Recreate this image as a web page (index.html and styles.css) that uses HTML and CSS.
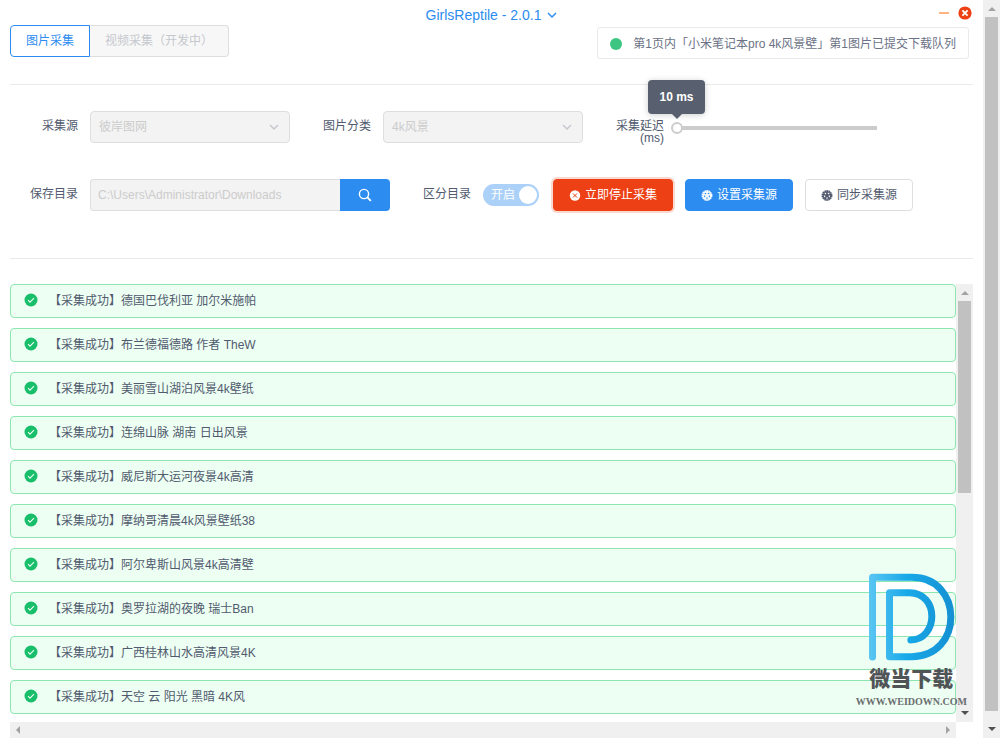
FILE: index.html
```html
<!DOCTYPE html>
<html lang="zh-CN">
<head>
<meta charset="utf-8">
<meta name="viewport" content="width=device-width, initial-scale=1">
<title>GirlsReptile - 2.0.1</title>
<link rel="stylesheet" href="styles.css">
</head>
<body>
<svg class="sprite" aria-hidden="true">
  <symbol id="chevron" viewBox="0 0 10 10"><path d="M1 3l4 4 4-4" fill="none" stroke="currentColor" stroke-width="1.5"/></symbol>
  <symbol id="close" viewBox="0 0 14 14"><circle cx="7" cy="7" r="6.6" fill="currentColor"/><path d="M4.4 4.4l5.2 5.2M9.6 4.4l-5.2 5.2" stroke="#fff" stroke-width="1.9"/></symbol>
  <symbol id="stop" viewBox="0 0 12 12"><circle cx="6" cy="6.5" r="5.2" fill="currentColor"/><path d="M4 4.5l4 4M8 4.5l-4 4" stroke="#ed4014" stroke-width="1"/></symbol>
  <symbol id="check" viewBox="0 0 14 14"><circle cx="7" cy="7" r="6.5" fill="currentColor"/><path d="M4 7.2l2 2 4-4" fill="none" stroke="#edfff3" stroke-width="1.1"/></symbol>
  <symbol id="search" viewBox="0 0 14 14"><circle cx="6" cy="6" r="4.6" fill="none" stroke="currentColor" stroke-width="1.4"/><path d="M9.2 9.2l3.6 3.6" stroke="currentColor" stroke-width="1.9"/></symbol>
  <symbol id="gear" viewBox="0 0 12 12"><circle cx="6" cy="6.5" r="4.7" fill="none" stroke="currentColor" stroke-width="1.5" stroke-dasharray="1.6 .5"/><circle cx="6" cy="6.5" r="3.7" fill="none" stroke="currentColor" stroke-width="1.2"/><path d="M6 6.5v-4M6 6.5l3.8-1.2M6 6.5l2.4 3.3M6 6.5l-2.4 3.3M6 6.5l-3.8-1.2" stroke="currentColor" stroke-width="1.7"/></symbol>
  <symbol id="arrow-up" viewBox="0 0 8 8"><path d="M0 6l4-4 4 4z" fill="currentColor"/></symbol>
  <symbol id="arrow-down" viewBox="0 0 8 8"><path d="M0 2l4 4 4-4z" fill="currentColor"/></symbol>
  <symbol id="arrow-left" viewBox="0 0 8 8"><path d="M6 0L2 4l4 4z" fill="currentColor"/></symbol>
  <symbol id="arrow-right" viewBox="0 0 8 8"><path d="M2 0l4 4-4 4z" fill="currentColor"/></symbol>
</svg>
<div class="app">
  <main class="content">
    <header class="top">
      <div class="tabs">
        <button class="tab tab-active" type="button">图片采集</button>
        <button class="tab" type="button" disabled>视频采集<span lang="zh-TW">（</span>开发中<span lang="zh-TW">）</span></button>
      </div>
      <a class="title" href="#">GirlsReptile - 2.0.1<svg class="icon-10"><use href="#chevron"/></svg></a>
      <div class="top-right">
        <div class="window-controls">
          <button class="minimize" type="button" aria-label="最小化"></button>
          <button class="close" type="button" aria-label="关闭"><svg class="icon-14"><use href="#close"/></svg></button>
        </div>
        <div class="status"><span class="dot"></span>第1页内「小米笔记本pro 4k风景壁」第1图片已提交下载队列</div>
      </div>
    </header>

    <form class="settings">
      <div class="row">
        <label class="label label-first" for="source">采集源</label>
        <div class="select">
          <select id="source" disabled><option>彼岸图网</option></select>
          <svg class="select-arrow icon-10"><use href="#chevron"/></svg>
        </div>
        <label class="label" for="category">图片分类</label>
        <div class="select">
          <select id="category" disabled><option>4k风景</option></select>
          <svg class="select-arrow icon-10"><use href="#chevron"/></svg>
        </div>
        <label class="label" for="delay">采集延迟<br>(ms)</label>
        <div class="slider">
          <output class="tooltip" for="delay">10 ms</output>
          <input id="delay" type="range" min="10" max="1000" value="10" disabled>
        </div>
      </div>
      <div class="row">
        <label class="label label-first" for="folder">保存目录</label>
        <div class="path">
          <input id="folder" type="text" value="C:\Users\Administrator\Downloads" disabled>
          <button type="button" aria-label="选择目录"><svg class="icon-14"><use href="#search"/></svg></button>
        </div>
        <label class="label" for="split">区分目录</label>
        <div class="switch">
          <input id="split" type="checkbox" checked disabled>
          <span class="switch-text">开启</span>
        </div>
        <div class="actions">
          <button class="btn btn-stop" type="button"><svg class="icon-12"><use href="#stop"/></svg>立即停止采集</button>
          <button class="btn btn-primary" type="button"><svg class="icon-12"><use href="#gear"/></svg>设置采集源</button>
          <button class="btn" type="button"><svg class="icon-12"><use href="#gear"/></svg>同步采集源</button>
        </div>
      </div>
    </form>

    <section class="log">
      <ul class="log-list">
        <li><svg class="icon-14"><use href="#check"/></svg>【采集成功】德国巴伐利亚 加尔米施帕</li>
        <li><svg class="icon-14"><use href="#check"/></svg>【采集成功】布兰德福德路 作者 TheW</li>
        <li><svg class="icon-14"><use href="#check"/></svg>【采集成功】美丽雪山湖泊风景4k壁纸</li>
        <li><svg class="icon-14"><use href="#check"/></svg>【采集成功】连绵山脉 湖南 日出风景</li>
        <li><svg class="icon-14"><use href="#check"/></svg>【采集成功】威尼斯大运河夜景4k高清</li>
        <li><svg class="icon-14"><use href="#check"/></svg>【采集成功】摩纳哥清晨4k风景壁纸38</li>
        <li><svg class="icon-14"><use href="#check"/></svg>【采集成功】阿尔卑斯山风景4k高清壁</li>
        <li><svg class="icon-14"><use href="#check"/></svg>【采集成功】奥罗拉湖的夜晚 瑞士Ban</li>
        <li><svg class="icon-14"><use href="#check"/></svg>【采集成功】广西桂林山水高清风景4K</li>
        <li><svg class="icon-14"><use href="#check"/></svg>【采集成功】天空 云 阳光 黑暗 4K风</li>
      </ul>
      <div class="scroll-y">
        <svg class="arrow"><use href="#arrow-up"/></svg>
        <div class="track"><div class="thumb thumb-log"></div></div>
        <svg class="arrow arrow-on"><use href="#arrow-down"/></svg>
      </div>
      <div class="scroll-x">
        <svg class="arrow"><use href="#arrow-left"/></svg>
        <svg class="arrow"><use href="#arrow-right"/></svg>
      </div>
    </section>
  </main>
  <div class="scroll-y">
    <svg class="arrow"><use href="#arrow-up"/></svg>
    <div class="track"><div class="thumb thumb-page"></div></div>
    <svg class="arrow arrow-on"><use href="#arrow-down"/></svg>
  </div>
  <div class="watermark">
    <svg class="logo" viewBox="84 38 260 264">
      <defs><linearGradient id="blue" gradientUnits="userSpaceOnUse" x1="86" y1="170" x2="342" y2="170"><stop offset="0" stop-color="#5bc6f2"/><stop offset=".45" stop-color="#18a8e8"/><stop offset="1" stop-color="#1590d2"/></linearGradient></defs>
      <path d="M97 290V51H215C290 51 332 107 332 170S290 289 215 289H148V97H208C252 97 275 132 275 168S252 239 212 239" fill="none" stroke="url(#blue)" stroke-width="21" stroke-linecap="round" stroke-linejoin="round"/>
    </svg>
    <strong class="brand">微当下载</strong>
    <span class="site">WWW.WEIDOWN.COM</span>
  </div>
</div>
</body>
</html>
```
FILE: styles.css
```css
* { box-sizing: border-box; }

body {
  margin: 0;
  background: #fff;
  color: #515a6e;
  font: 12px/18px "Liberation Sans", "Noto Sans CJK SC", sans-serif;
}

button, input, select { font: inherit; }
button { padding: 0; cursor: pointer; }

.sprite { position: absolute; width: 0; height: 0; }
.icon-10 { width: 10px; height: 10px; }
.icon-12 { width: 12px; height: 12px; }
.icon-14 { width: 14px; height: 14px; }

.app { position: relative; display: flex; min-height: 100vh; }
.content { flex: 1; min-width: 0; padding: 0 10px; }

/* Header */
.top {
  display: grid;
  grid-template-columns: 1fr auto 1fr;
  align-items: start;
  height: 85px;
  border-bottom: 1px solid #e8eaec;
}
.tabs { display: flex; padding-top: 25px; }
.tab {
  height: 32px;
  padding: 0 15px;
  border: 1px solid #dcdee2;
  border-left: 0;
  border-radius: 0 4px 4px 0;
  background: #f7f7f7;
  color: #c5c8ce;
  white-space: nowrap;
}
.tab span { font-family: "Noto Sans CJK TC", sans-serif; line-height: 12px; }
.tab-active {
  border: 1px solid #2d8cf0;
  border-radius: 4px 0 0 4px;
  background: #fff;
  color: #2d8cf0;
}
.title {
  display: flex;
  align-items: center;
  gap: 6px;
  padding-top: 6px;
  color: #2d8cf0;
  font-size: 14px;
  text-decoration: none;
}
.top-right {
  display: flex;
  flex-direction: column;
  align-items: flex-end;
  gap: 7px;
  padding-top: 6px;
}
.window-controls { display: flex; align-items: center; gap: 9px; padding-right: 1px; }
.minimize { width: 10px; height: 2px; border: 0; background: #ffb583; }
.close { display: flex; border: 0; background: none; color: #ed4014; }
.status {
  display: flex;
  align-items: center;
  height: 32px;
  margin-right: 4px;
  padding: 1px 12px 0;
  border: 1px solid #e8eaec;
  border-radius: 3px;
  color: #6b7286;
  white-space: nowrap;
}
.dot { width: 12px; height: 12px; margin-right: 11px; border-radius: 50%; background: #3cc681; }

/* Settings */
.settings {
  display: grid;
  gap: 36px;
  padding: 26px 0 47px;
  border-bottom: 1px solid #e8eaec;
}
.row { display: flex; height: 32px; }
.label {
  width: 93px;
  padding: 9px 12px 0 0;
  line-height: 12px;
  text-align: right;
  white-space: nowrap;
}
.label-first { width: 80px; }
.select { position: relative; width: 200px; }
.select select {
  width: 100%;
  height: 32px;
  padding: 0 8px;
  border: 1px solid #dcdee2;
  border-radius: 4px;
  background: #f3f3f3;
  color: #ccc;
  opacity: 1;
  appearance: none;
}
.select-arrow { position: absolute; top: 11px; right: 11px; color: #c5c8ce; pointer-events: none; }

.slider { position: relative; display: flex; align-items: center; }
.slider input {
  width: 212px;
  height: 12px;
  margin: 2px 0 0 -5px;
  background: linear-gradient(#ccc, #ccc) center / 200px 4px no-repeat;
  appearance: none;
}
.slider input::-webkit-slider-thumb {
  width: 12px;
  height: 12px;
  border: 2px solid #ccc;
  border-radius: 50%;
  background: #fff;
  appearance: none;
}
.tooltip {
  position: absolute;
  bottom: 29px;
  left: -28px;
  width: 57px;
  border-radius: 4px;
  background: #585f6e;
  box-shadow: 0 1px 6px rgba(0, 0, 0, .2);
  color: #fff;
  font-weight: bold;
  line-height: 34px;
  text-align: center;
}
.tooltip::after {
  content: "";
  position: absolute;
  top: 100%;
  left: 50%;
  margin-left: -5px;
  border: 5px solid transparent;
  border-top-color: #585f6e;
  border-bottom: 0;
}

.path { display: flex; width: 300px; }
.path input {
  flex: 1;
  min-width: 0;
  padding: 0 7px;
  border: 1px solid #dcdee2;
  border-right: 0;
  border-radius: 4px 0 0 4px;
  background: #f3f3f3;
  color: #ccc;
}
.path button {
  display: flex;
  align-items: center;
  justify-content: center;
  width: 50px;
  border: 0;
  border-radius: 0 4px 4px 0;
  background: #2d8cf0;
  color: #fff;
}

.switch { position: relative; width: 56px; padding-top: 5px; }
.switch input {
  display: flex;
  justify-content: flex-end;
  align-items: center;
  width: 56px;
  height: 22px;
  margin: 0;
  padding: 1px;
  border-radius: 11px;
  background: #abd1f9;
  appearance: none;
}
.switch input::after { content: ""; width: 18px; height: 18px; margin-right: 1px; border-radius: 50%; background: #fff; }
.switch-text { position: absolute; top: 7px; left: 8px; color: #fff; pointer-events: none; }

.actions { display: flex; gap: 12px; margin-left: 14px; }
.btn {
  display: flex;
  align-items: center;
  gap: 4px;
  padding: 0 15px;
  border: 1px solid #dcdee2;
  border-radius: 4px;
  background: #fff;
  color: #515a6e;
  white-space: nowrap;
}
.btn-stop { border-color: #ed4014; background: #ed4014; box-shadow: 0 0 0 2px rgba(237, 64, 20, .2); color: #fff; }
.btn-primary { border-color: #2d8cf0; background: #2d8cf0; color: #fff; }

/* Log */
.log { display: grid; grid-template-columns: 1fr 17px; padding-top: 25px; }
.log-list {
  display: grid;
  gap: 10px;
  margin: 0;
  padding: 0 0 8px;
  list-style: none;
}
.log-list li {
  display: flex;
  align-items: center;
  height: 34px;
  padding: 0 13px;
  border: 1px solid #8ce6b0;
  border-radius: 4px;
  background: #edfff3;
}
.log-list svg { margin: 0 11px 2px 0; color: #19be6b; }

/* Scrollbars */
.scroll-y {
  display: flex;
  flex-direction: column;
  align-items: center;
  width: 17px;
  padding: 5px 2px;
  background: #f0f0f0;
}
.scroll-x {
  display: flex;
  align-items: center;
  justify-content: space-between;
  height: 16px;
  padding: 0 4px;
  background: #f0f0f0;
}
.arrow { width: 8px; height: 8px; color: #a3a3a3; }
.arrow-on { color: #505050; }
.track { display: flex; flex: 1; flex-direction: column; width: 100%; margin: 4px 0; }
.thumb { background: #c1c1c1; }
.thumb-log { flex: 0 0 47.5%; }
.thumb-page { flex: 0 0 98.6%; }

/* Watermark */
.watermark {
  position: absolute;
  right: 33px;
  bottom: 31px;
  display: flex;
  flex-direction: column;
  align-items: center;
  color: #505457;
  pointer-events: none;
}
.logo { width: 87px; height: 88px; }
.brand { font-size: 21px; font-weight: 900; line-height: 36px; }
.site { font: bold 10px/10px "Liberation Serif", serif; color: #6b6e70; }
```
